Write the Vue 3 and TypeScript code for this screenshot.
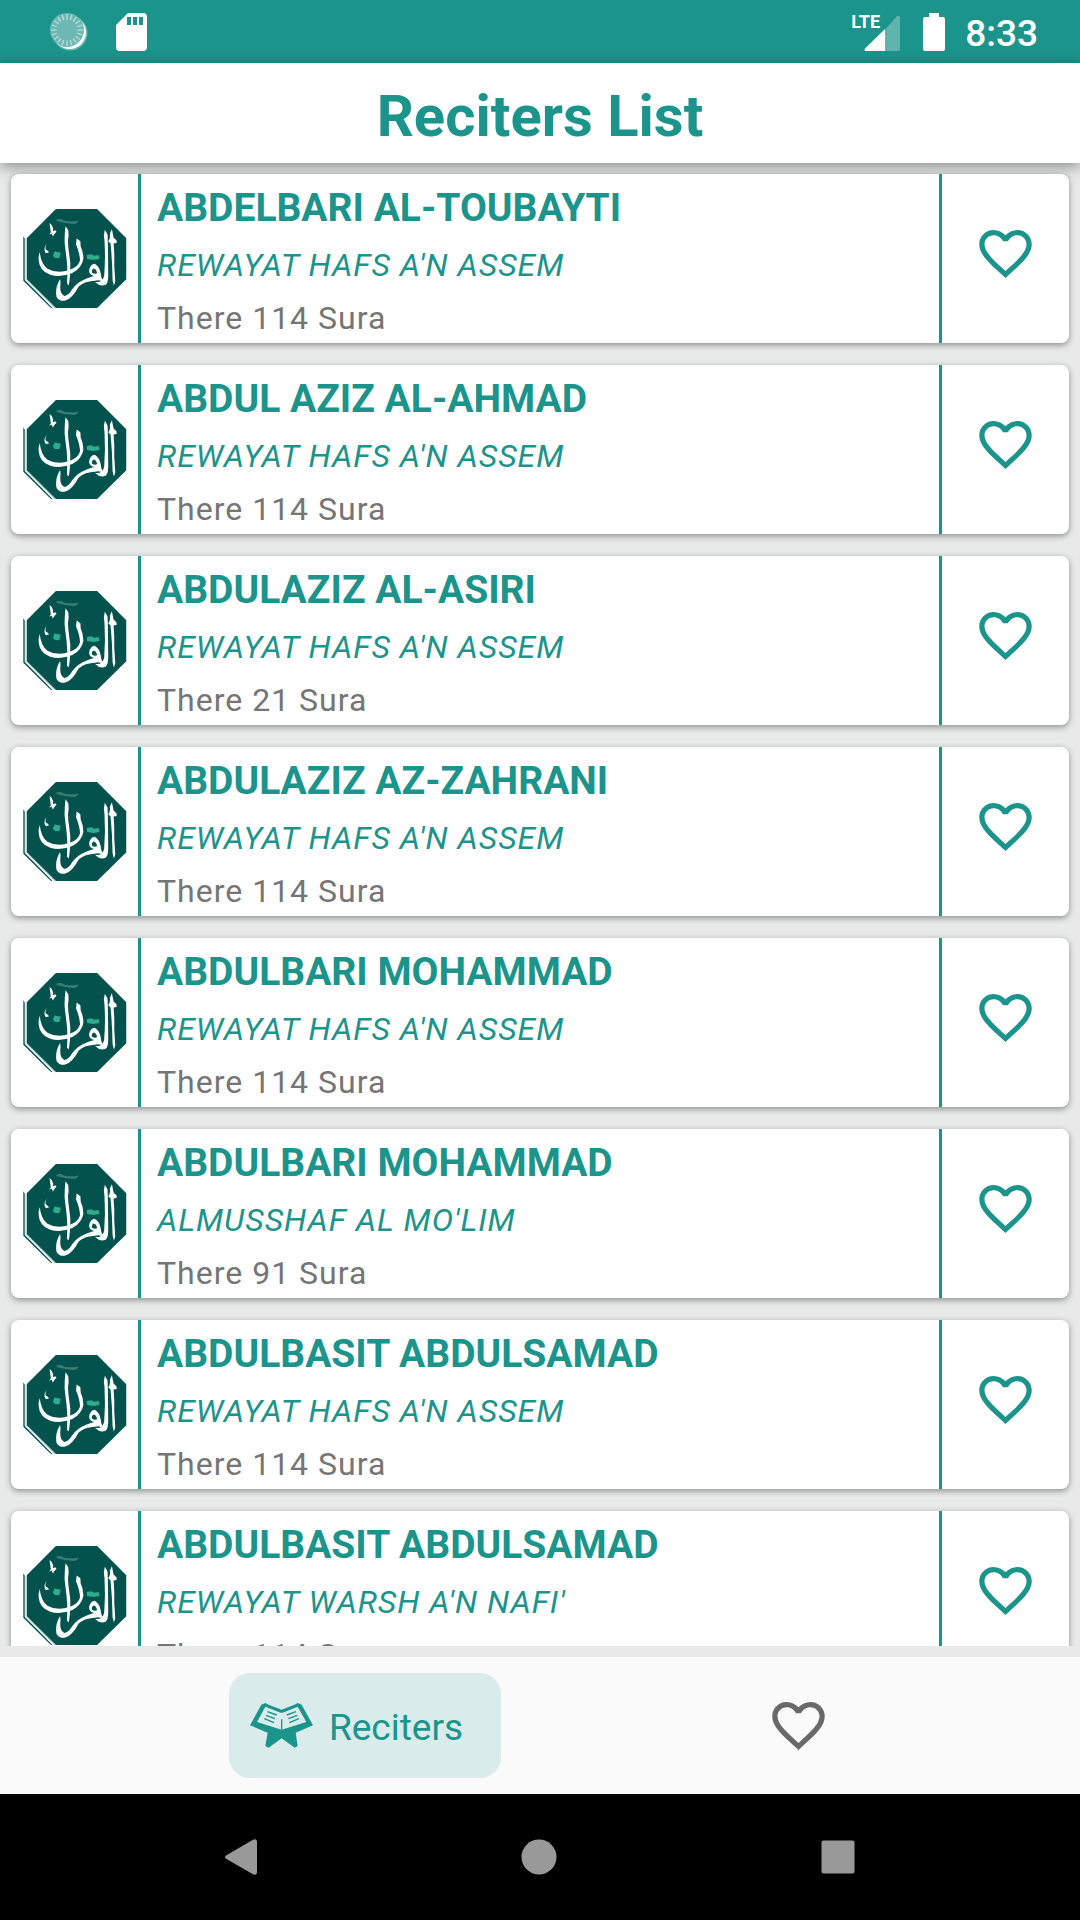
<script setup lang="ts">
import { ref } from 'vue'

interface Reciter {
  id: number
  name: string
  rewaya: string
  count: number
}

const reciters: Reciter[] = [
  { id: 1, name: 'ABDELBARI AL-TOUBAYTI', rewaya: "REWAYAT HAFS A'N ASSEM", count: 114 },
  { id: 2, name: 'ABDUL AZIZ AL-AHMAD', rewaya: "REWAYAT HAFS A'N ASSEM", count: 114 },
  { id: 3, name: 'ABDULAZIZ AL-ASIRI', rewaya: "REWAYAT HAFS A'N ASSEM", count: 21 },
  { id: 4, name: 'ABDULAZIZ AZ-ZAHRANI', rewaya: "REWAYAT HAFS A'N ASSEM", count: 114 },
  { id: 5, name: 'ABDULBARI MOHAMMAD', rewaya: "REWAYAT HAFS A'N ASSEM", count: 114 },
  { id: 6, name: 'ABDULBARI MOHAMMAD', rewaya: "ALMUSSHAF AL MO'LIM", count: 91 },
  { id: 7, name: 'ABDULBASIT ABDULSAMAD', rewaya: "REWAYAT HAFS A'N ASSEM", count: 114 },
  { id: 8, name: 'ABDULBASIT ABDULSAMAD', rewaya: "REWAYAT WARSH A'N NAFI'", count: 114 },
]

const favorites = ref<number[]>([])

function toggleFavorite(id: number): void {
  favorites.value = favorites.value.includes(id)
    ? favorites.value.filter((f) => f !== id)
    : [...favorites.value, id]
}

const heartOutline =
  'M12.1,18.55L12,18.65L11.89,18.55C7.14,14.24 4,11.39 4,8.5C4,6.5 5.5,5 7.5,5C9.04,5 10.54,6 11.07,7.36H12.93C13.46,6 14.96,5 16.5,5C18.5,5 20,6.5 20,8.5C20,11.39 16.86,14.24 12.1,18.55M16.5,3C14.76,3 13.09,3.81 12,5.08C10.91,3.81 9.24,3 7.5,3C4.42,3 2,5.41 2,8.5C2,12.27 5.4,15.36 10.55,20.03L12,21.35L13.45,20.03C18.6,15.36 22,12.27 22,8.5C22,5.41 19.58,3 16.5,3Z'
const heartFilled =
  'M12,21.35L10.55,20.03C5.4,15.36 2,12.27 2,8.5C2,5.41 4.42,3 7.5,3C9.24,3 10.91,3.81 12,5.08C13.09,3.81 14.76,3 16.5,3C19.58,3 22,5.41 22,8.5C22,12.27 18.6,15.36 13.45,20.03L12,21.35Z'

const ticks = Array.from({ length: 20 }, (_, i) => i * 18)
</script>

<template>
  <div class="app">
    <div class="status-bar">
      <div class="status-group">
        <svg class="sync" viewBox="0 0 38 39" aria-hidden="true">
          <circle cx="20" cy="21" r="17.5" fill="#6db8b3" />
          <circle cx="19.500" cy="20.500" r="16.500" fill="#fff" />
          <circle cx="17" cy="18" r="17" fill="#6db8b3" />
          <g stroke="#b9dedb" stroke-width="1.300">
            <line v-for="t in ticks" :key="t" x1="17" y1="2" x2="17" y2="7.500" :transform="`rotate(${t} 17 18)`" />
          </g>
        </svg>
        <svg class="sd" viewBox="0 0 31 38" aria-hidden="true">
          <path d="M12 0H27a4 4 0 0 1 4 4V34a4 4 0 0 1-4 4H4a4 4 0 0 1-4-4V12ZM11 4V12H15V4ZM17 4V12H21V4ZM23 4V12H27V4Z" fill="#fff" fill-rule="evenodd" />
        </svg>
      </div>
      <div class="status-group">
        <div class="signal">
          <span class="lte">LTE</span>
          <svg class="bars" viewBox="0 0 36 36" aria-hidden="true">
            <path d="M21 14.500L33 1.300Q36 -0.500 36 2.500V34Q36 36 34 36H21Z" fill="#60b4ae" />
            <path d="M21 14V36H2Q-0.500 35.500 1 33.500Z" fill="#fff" />
          </svg>
        </div>
        <svg class="battery" viewBox="0 0 22 38" aria-hidden="true">
          <path d="M6 0H16V4H20Q22 4 22 6V36Q22 38 20 38H2Q0 38 0 36V6Q0 4 2 4H6Z" fill="#fff" />
        </svg>
        <time class="clock">8:33</time>
      </div>
    </div>

    <header class="header">
      <h1 class="title">Reciters List</h1>
    </header>

    <main class="list-area">
      <ul class="list">
        <li v-for="r in reciters" :key="r.id" class="card">
          <div class="avatar">
            <svg class="logo" viewBox="35 48 313 313" aria-hidden="true">
              <path d="M136 57H259L346 144V266L259 352H136L49 266V144Z" fill="#03524e" />
              <path d="M348 144V266L345 268V143Z" fill="#c5d3cf" />
              <path d="M39 138L43 145V267L122 353L39 271ZM47 270L126 352H122L43 272Z" fill="#03524e" />
              <path d="M44 142H49V266L135 352H128L44 269Z" fill="#fff" />
              <path d="M47 146V267L134 353" fill="none" stroke="#03524e" stroke-width="1" />
              <path d="M138 88Q150 84 160 91Q180 96 203 91Q202 100 188 102Q164 101 138 93Z" fill="#397c74" />
              <path d="M132 184L151 187L146 204L133 203L127 196Z" fill="#2fab8d" />
              <path d="M228 194L243 192L249 196L264 194L266 206L248 209L229 206Z" fill="#2fab8d" />
              <g fill="#fff">
                <path d="M117 99Q127 105 128 115L127 123L134 120L138 125L132 131L127 139L123 130L116 134L121 126Z" />
                <path d="M108 161Q101 179 110 180L116 186L106 189Q97 177 108 161Z" />
                <path d="M165 108L173 120L174 137Q171 150 173 170L179 218Q179 265 174 285L169 279Q172 240 168 207Q164 175 162 156Q162 125 165 108Z" />
                <path d="M198 145L209 153L210 169Q218 186 218 205Q213 233 185 248Q149 263 119 253Q87 241 85 211Q83 199 88 185Q91 220 111 235Q141 252 178 238Q204 229 208 210Q207 188 196 162Z" />
                <path fill-rule="evenodd" d="M148 266Q151 271 149 288Q148 310 162 316Q174 315 184 297Q200 274 228 264Q241 260 250 257Q235 253 235 240Q239 220 252 220Q266 228 270 250Q270 264 281 276Q265 267 257 270Q220 272 204 288Q185 324 164 330Q147 333 138 319Q134 298 142 278ZM249 234Q241 238 244 247Q252 252 259 248Q257 236 249 234Z" />
                <path d="M282 119L290 133L291 163L292 247Q293 278 284 283Q268 290 252 274Q276 278 280 255Q284 205 281 153L279 135Z" />
                <path d="M303 117L308 142L317 151V158L308 160Q311 190 310 225L313 273L309 285L305 269Q304 210 299 160L292 153Q299 145 297 130Z" />
              </g>
            </svg>
          </div>
          <div class="info">
            <h2 class="name">{{ r.name }}</h2>
            <p class="rewaya">{{ r.rewaya }}</p>
            <p class="count">There {{ r.count }} Sura</p>
          </div>
          <button class="fav" type="button" :aria-label="`Favorite ${r.name}`" @click="toggleFavorite(r.id)">
            <svg class="icon" viewBox="0 0 24 24"><path :d="favorites.includes(r.id) ? heartFilled : heartOutline" fill="currentColor" /></svg>
          </button>
        </li>
      </ul>
    </main>

    <nav class="tabs">
      <button class="tab active" type="button">
        <svg class="icon" viewBox="0 28 189 189" aria-hidden="true">
          <path d="M0 122L34 60L46 55L52 59L95 75L137 59L143 55L155 60L189 122L137 144L143 184L134 189L95 161L56 189L46 184L53 144Z" fill="#1b948c" />
          <path d="M46 66L92 84H98L143 66L169 112L95 135L21 112Z" fill="#d9ebea" />
          <path d="M95 104V138M52 81L80 91M48 92L75 102M43 102L72 114" fill="none" stroke="#1b948c" stroke-width="4" />
          <path d="M138 81L110 91M142 92L115 102M147 102L118 114" fill="none" stroke="#1b948c" stroke-width="4" />
        </svg>
        <span class="tab-label">Reciters</span>
      </button>
      <button class="tab" type="button" aria-label="Favorites">
        <svg class="icon" viewBox="0 0 24 24"><path :d="heartOutline" fill="currentColor" /></svg>
      </button>
    </nav>

    <div class="system-nav">
      <button type="button" aria-label="Back">
        <svg viewBox="0 0 36 36"><path d="M3 16.500L30 0.800Q34 -1 34 3V33Q34 37 30 35.200L3 19.800Q1 18 3 16.500Z" fill="#999" /></svg>
      </button>
      <button type="button" aria-label="Home">
        <svg viewBox="0 0 36 36"><circle cx="18" cy="18" r="17.500" fill="#999" /></svg>
      </button>
      <button type="button" aria-label="Recent apps">
        <svg viewBox="0 0 36 36"><rect x="1.500" y="1.500" width="33" height="33" rx="2" fill="#999" /></svg>
      </button>
    </div>
  </div>
</template>

<style>
body {
  margin: 0;
  background: #e8eae9;
}
</style>

<style scoped>
.app {
  display: flex;
  flex-direction: column;
  height: 100vh;
  background: #e8eae9;
  font-family: Roboto, 'Noto Sans', sans-serif;
  color: #1b948c;
}

button {
  display: flex;
  align-items: center;
  justify-content: center;
  margin: 0;
  padding: 0;
  border: 0;
  background: none;
  color: inherit;
  font: inherit;
  cursor: pointer;
}

svg {
  display: block;
  flex: none;
}

.status-bar {
  display: flex;
  flex: none;
  justify-content: space-between;
  height: 63px;
  padding: 0 42px 0 50px;
  background: #1b948c;
  color: #fff;
}

.status-group {
  display: flex;
  align-items: center;
}

.sync {
  width: 38px;
  height: 39px;
}

.sd {
  width: 31px;
  height: 38px;
  margin-left: 28px;
}

.signal {
  display: flex;
  align-items: flex-end;
  position: relative;
  height: 38px;
}

.lte {
  position: absolute;
  right: 20px;
  top: 0;
  font-size: 18px;
  font-weight: 700;
  line-height: 18px;
}

.bars {
  width: 36px;
  height: 36px;
}

.battery {
  width: 22px;
  height: 38px;
  margin: 0 20px 0 23px;
}

.clock {
  padding-top: 4px;
  font-size: 37px;
  font-weight: 500;
  line-height: 44px;
}

.header {
  position: relative;
  z-index: 1;
  flex: none;
  height: 100px;
  background: #fff;
  box-shadow: 0 4px 14px rgba(0, 0, 0, 0.4);
}

.title {
  margin: 0;
  padding-top: 12px;
  font-size: 58px;
  font-weight: 700;
  line-height: 82px;
  text-align: center;
}

.list-area {
  flex: 1;
  min-height: 0;
  margin-bottom: 11px;
  overflow-y: auto;
  scrollbar-width: none;
}

.list {
  display: flex;
  flex-direction: column;
  gap: 22px;
  margin: 0;
  padding: 11px;
  list-style: none;
}

.card {
  position: relative;
  z-index: 2;
  display: flex;
  height: 169px;
  border-radius: 8px;
  background: #fff;
  box-shadow: 0 2px 6px rgba(0, 0, 0, 0.4);
}

.avatar {
  display: flex;
  flex: none;
  align-items: center;
  justify-content: center;
  width: 127px;
}

.logo {
  width: 105px;
  height: 105px;
}

.info {
  flex: 1;
  min-width: 0;
  padding: 5px 16px 0;
  border-right: 3px solid #1b948c;
  border-left: 3px solid #1b948c;
}

.name,
.rewaya,
.count {
  margin: 0;
  white-space: nowrap;
}

.name {
  font-size: 39px;
  font-weight: 700;
  line-height: 58px;
}

.rewaya {
  font-size: 32px;
  font-style: italic;
  line-height: 56px;
  letter-spacing: 1px;
}

.count {
  color: #757575;
  font-size: 32px;
  line-height: 50px;
  letter-spacing: 1px;
}

.fav {
  flex: none;
  width: 127px;
  padding-bottom: 10px;
}

.icon {
  width: 63px;
  height: 63px;
}

.tabs {
  display: flex;
  flex: none;
  align-items: center;
  justify-content: space-between;
  height: 137px;
  padding: 0 21.2%;
  background: #fafafa;
}

.tab {
  height: 105px;
  padding: 0 21px;
  border-radius: 21px;
  color: #696969;
}

.tab.active {
  background: #d9ebea;
  color: #1b948c;
}

.tab-label {
  padding: 4px 17px 0 16px;
  font-size: 37px;
  line-height: 44px;
}

.system-nav {
  display: flex;
  flex: none;
  height: 126px;
  padding: 0 93px 0 92px;
  background: #000;
}

.system-nav button {
  flex: 1;
}

.system-nav svg {
  width: 36px;
  height: 36px;
}
</style>
